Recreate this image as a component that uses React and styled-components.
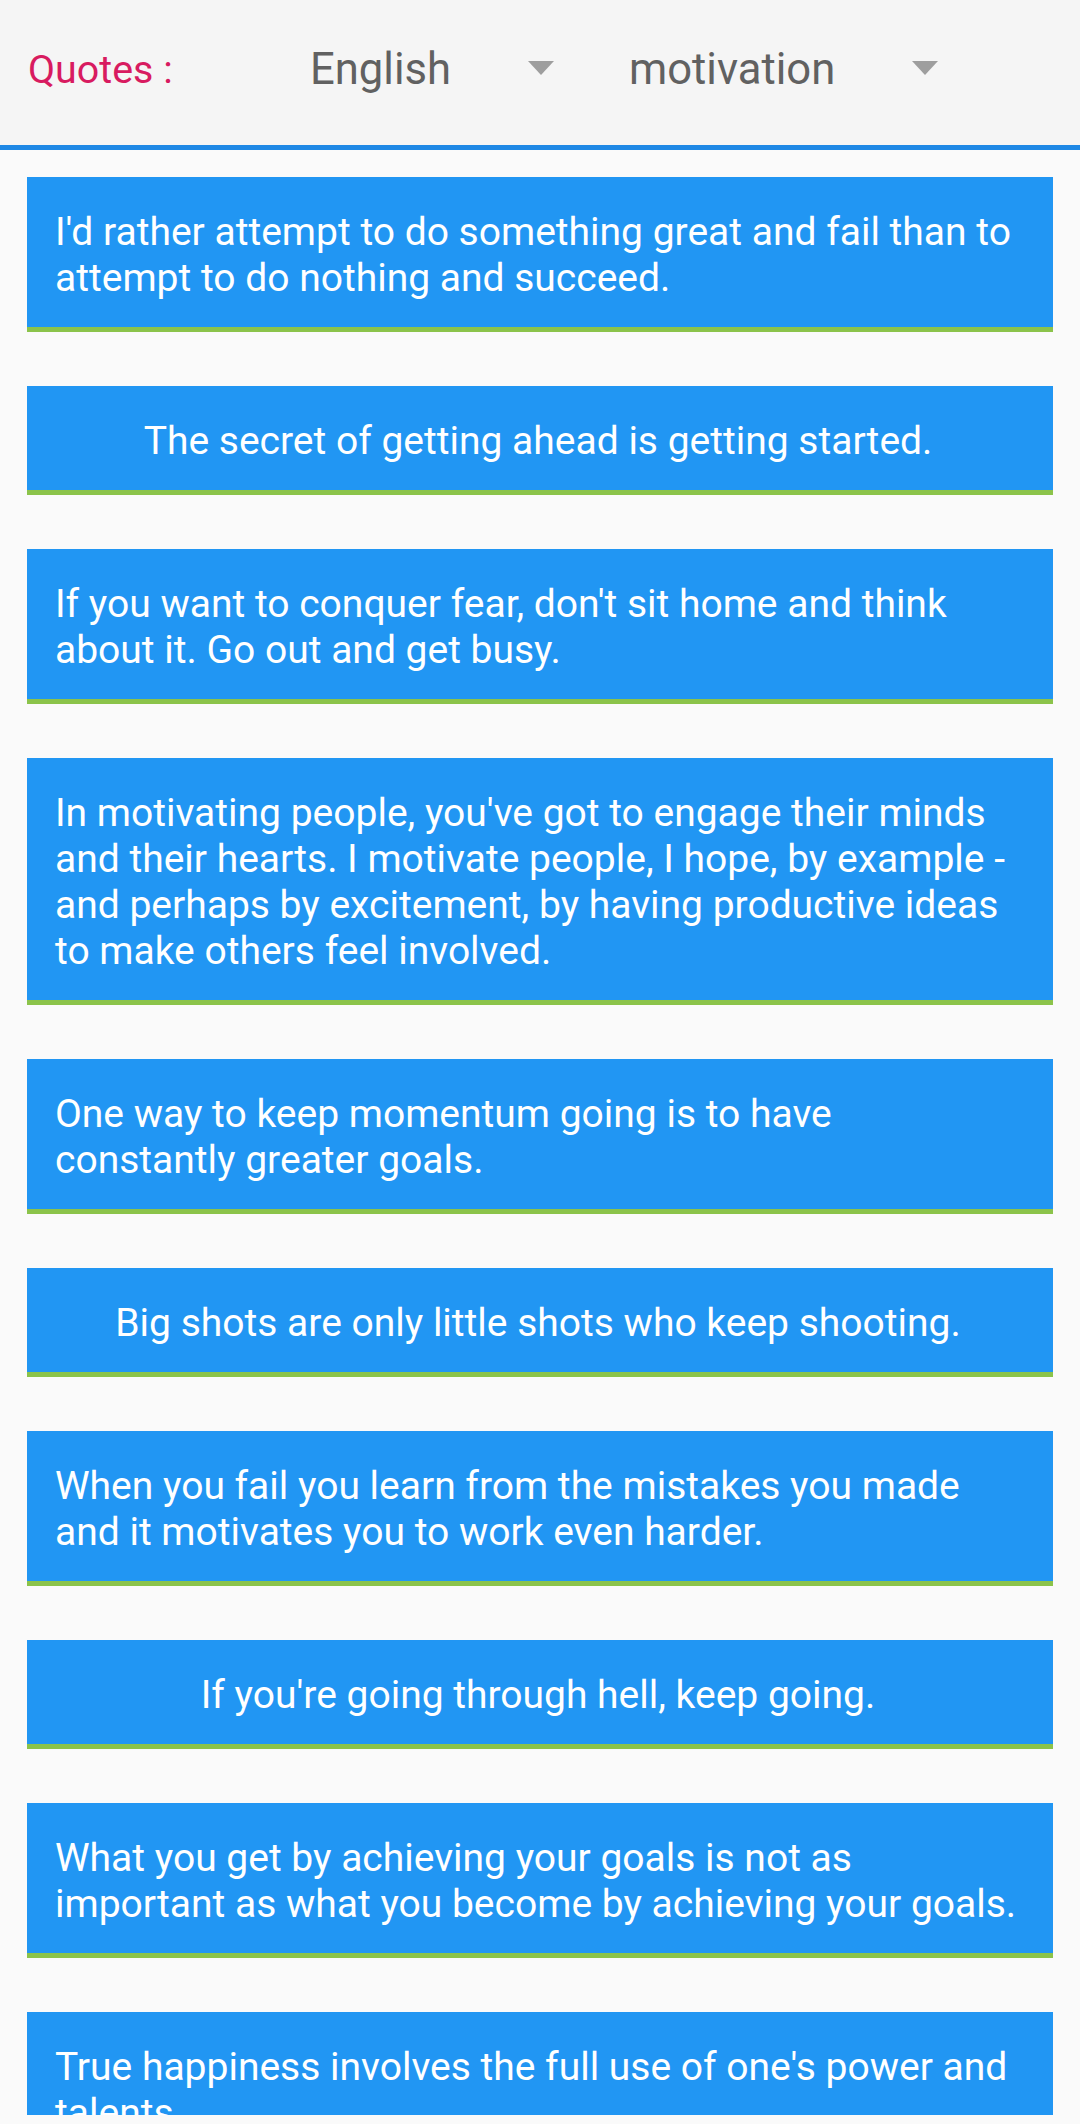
import React from "react";
import styled, { createGlobalStyle } from "styled-components";

const GlobalStyle = createGlobalStyle`
  html, body {
    margin: 0;
    padding: 0;
    background: #fafafa;
    font-family: Roboto, "Noto Sans", "Liberation Sans", sans-serif;
  }
  * { box-sizing: border-box; }
`;

const Page = styled.div`
  height: 2124px;
  display: flex;
  flex-direction: column;
  background: #fafafa;
  overflow: hidden;
`;

const Header = styled.header`
  flex: none;
  height: 150px;
  display: flex;
  align-items: center;
  padding: 0 0 5px 28px;
  background: #f5f5f5;
  border-bottom: 5px solid #1e88e5;
`;

const Label = styled.div`
  flex: none;
  width: 262px;
  color: #d81b60;
  font-size: 39.4px;
  line-height: 46px;
`;

const Spinner = styled.div`
  flex: none;
  width: ${(p) => p.$width}px;
  margin-right: ${(p) => p.$gap || 0}px;
  display: flex;
  align-items: center;
  padding-left: 20px;
  padding-right: 26px;
`;

const SpinnerText = styled.span`
  color: #616161;
  font-size: 43.6px;
  line-height: 52px;
`;

const Arrow = styled.span`
  margin-left: auto;
  width: 0;
  height: 0;
  border-left: 13px solid transparent;
  border-right: 13px solid transparent;
  border-top: 14px solid #9e9e9e;
  margin-top: -4px;
`;

const List = styled.main`
  flex: 1;
  min-height: 0;
  overflow: hidden;
  display: flex;
  flex-direction: column;
  gap: 54px;
  padding: 27px 27px 0;
  margin-bottom: 9px;
`;

const Card = styled.div`
  flex: none;
  display: flex;
  justify-content: center;
  background: #2196f3;
  border-bottom: 5px solid #8bc34a;
  padding: 32px 32px 26px 28px;
`;

const QuoteText = styled.p`
  margin: 0;
  color: #ffffff;
  font-size: 39px;
  line-height: 46px;
  text-align: left;
`;

const quotes = [
  "I'd rather attempt to do something great and fail than to attempt to do nothing and succeed.",
  "The secret of getting ahead is getting started.",
  "If you want to conquer fear, don't sit home and think about it. Go out and get busy.",
  "In motivating people, you've got to engage their minds and their hearts. I motivate people, I hope, by example - and perhaps by excitement, by having productive ideas to make others feel involved.",
  "One way to keep momentum going is to have constantly greater goals.",
  "Big shots are only little shots who keep shooting.",
  "When you fail you learn from the mistakes you made and it motivates you to work even harder.",
  "If you're going through hell, keep going.",
  "What you get by achieving your goals is not as important as what you become by achieving your goals.",
  "True happiness involves the full use of one's power and talents.",
];

export default function App() {
  return (
    <>
      <GlobalStyle />
      <Page>
        <Header>
          <Label>Quotes :</Label>
          <Spinner $width={290} $gap={29}>
            <SpinnerText>English</SpinnerText>
            <Arrow />
          </Spinner>
          <Spinner $width={355}>
            <SpinnerText>motivation</SpinnerText>
            <Arrow />
          </Spinner>
        </Header>
        <List>
          {quotes.map((q, i) => (
            <Card key={i}>
              <QuoteText>{q}</QuoteText>
            </Card>
          ))}
        </List>
      </Page>
    </>
  );
}
